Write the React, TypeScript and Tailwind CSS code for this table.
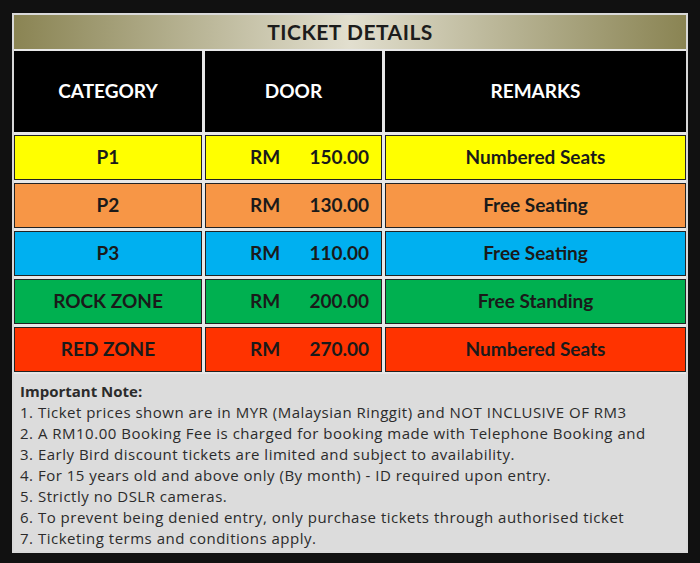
const rows = [
  { cat: "P1", price: "150.00", remark: "Numbered Seats", bg: "bg-[#ffff00]" },
  { cat: "P2", price: "130.00", remark: "Free Seating", bg: "bg-[#f79646]" },
  { cat: "P3", price: "110.00", remark: "Free Seating", bg: "bg-[#00b0f0]" },
  { cat: "ROCK ZONE", price: "200.00", remark: "Free Standing", bg: "bg-[#00b050]" },
  { cat: "RED ZONE", price: "270.00", remark: "Numbered Seats", bg: "bg-[#ff3300]" },
];

const notes = [
  "1. Ticket prices shown are in MYR (Malaysian Ringgit) and NOT INCLUSIVE OF RM3",
  "2. A RM10.00 Booking Fee is charged for booking made with Telephone Booking and",
  "3. Early Bird discount tickets are limited and subject to availability.",
  "4. For 15 years old and above only (By month) - ID required upon entry.",
  "5. Strictly no DSLR cameras.",
  "6. To prevent being denied entry, only purchase tickets through authorised ticket",
  "7. Ticketing terms and conditions apply.",
];

export default function App() {
  return (
    <div className="w-[700px] h-[563px] bg-[#111111] pt-[13px] pl-[12px] overflow-hidden font-['Lato',sans-serif]">
      <div className="w-[676px] border-2 border-[#d9d9d9] bg-[#e6e6e6]">
        <div className="h-[36px] flex items-center justify-center bg-gradient-to-r from-[#8a8453] via-[#e2dfcf] to-[#8a8453] border-b-2 border-[#e8e8e8]">
          <span className="text-[21px] font-bold text-[#1c1c1c] tracking-[0.5px]">TICKET DETAILS</span>
        </div>

        <div className="grid grid-cols-[188px_177px_1fr] gap-[3px] bg-[#e8e8e8]">
          <div className="h-[81px] bg-black flex items-center justify-center text-white font-bold text-[19px]">CATEGORY</div>
          <div className="h-[81px] bg-black flex items-center justify-center text-white font-bold text-[19px]">DOOR</div>
          <div className="h-[81px] bg-black flex items-center justify-center text-white font-bold text-[19px]">REMARKS</div>

          {rows.map((r) => (
            <>
              <div key={r.cat + "a"} className={`h-[45px] ${r.bg} border border-[#222] flex items-center justify-center text-[19px] font-bold text-[#1a1a1a]`}>
                {r.cat}
              </div>
              <div key={r.cat + "b"} className={`h-[45px] ${r.bg} border border-[#222] flex items-center text-[19px] font-bold text-[#1a1a1a] pl-[44px] pr-[12px]`}>
                <span>RM</span>
                <span className="ml-auto">{r.price}</span>
              </div>
              <div key={r.cat + "c"} className={`h-[45px] ${r.bg} border border-[#222] flex items-center justify-center text-[19px] font-bold text-[#1a1a1a]`}>
                {r.remark}
              </div>
            </>
          ))}
        </div>

        <div className="mt-[2px] bg-[#dcdcdc] px-[6px] pt-[7px] pb-[2px] font-['Open_Sans',sans-serif] text-[15px] leading-[21px] tracking-[0.5px] text-[#2b2b2b]">
          <div className="font-bold tracking-normal">Important Note:</div>
          {notes.map((n) => (
            <div key={n}>{n}</div>
          ))}
        </div>
      </div>
    </div>
  );
}
